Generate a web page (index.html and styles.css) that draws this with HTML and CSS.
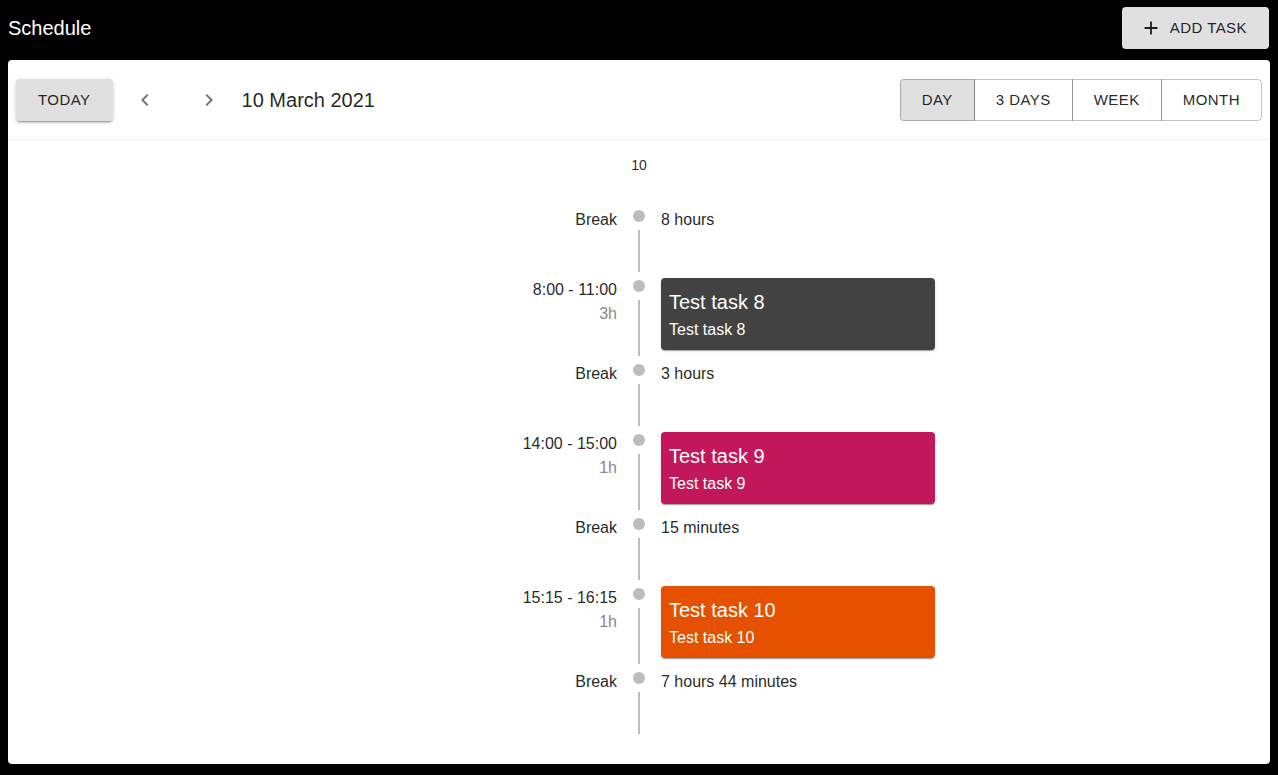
FILE: index.html
```html
<!DOCTYPE html>
<html lang="en">
<head>
<meta charset="utf-8">
<title>Schedule</title>
<link rel="stylesheet" href="styles.css">
</head>
<body>
<header class="appbar">
  <h1 class="app-title">Schedule</h1>
  <button class="btn btn-contained btn-add">
    <svg class="btn-icon" viewBox="0 0 24 24" width="22" height="22"><path d="M19 13h-6v6h-2v-6H5v-2h6V5h2v6h6v2z"/></svg>
    <span>Add task</span>
  </button>
</header>
<main class="paper">
  <div class="toolbar">
    <button class="btn btn-contained">Today</button>
    <button class="icon-btn icon-prev" aria-label="previous">
      <svg viewBox="0 0 24 24" width="24" height="24"><path d="M15.41 7.41L14 6l-6 6 6 6 1.41-1.41L10.83 12z"/></svg>
    </button>
    <button class="icon-btn icon-next" aria-label="next">
      <svg viewBox="0 0 24 24" width="24" height="24"><path d="M10 6L8.59 7.41 13.17 12l-4.58 4.59L10 18l6-6z"/></svg>
    </button>
    <div class="date">10 March 2021</div>
    <div class="spacer"></div>
    <div class="group">
      <button class="btn btn-outlined selected">Day</button>
      <button class="btn btn-outlined">3 days</button>
      <button class="btn btn-outlined">Week</button>
      <button class="btn btn-outlined">Month</button>
    </div>
  </div>
  <div class="day-label">10</div>
  <ul class="timeline">
    <li class="item">
      <div class="opp">Break</div>
      <div class="sep"><span class="dot"></span><span class="conn"></span></div>
      <div class="content">8 hours</div>
    </li>
    <li class="item">
      <div class="opp">8:00 - 11:00<span class="dur">3h</span></div>
      <div class="sep"><span class="dot"></span><span class="conn"></span></div>
      <div class="content">
        <div class="card card-grey">
          <div class="card-title">Test task 8</div>
          <div class="card-sub">Test task 8</div>
        </div>
      </div>
    </li>
    <li class="item">
      <div class="opp">Break</div>
      <div class="sep"><span class="dot"></span><span class="conn"></span></div>
      <div class="content">3 hours</div>
    </li>
    <li class="item">
      <div class="opp">14:00 - 15:00<span class="dur">1h</span></div>
      <div class="sep"><span class="dot"></span><span class="conn"></span></div>
      <div class="content">
        <div class="card card-pink">
          <div class="card-title">Test task 9</div>
          <div class="card-sub">Test task 9</div>
        </div>
      </div>
    </li>
    <li class="item">
      <div class="opp">Break</div>
      <div class="sep"><span class="dot"></span><span class="conn"></span></div>
      <div class="content">15 minutes</div>
    </li>
    <li class="item">
      <div class="opp">15:15 - 16:15<span class="dur">1h</span></div>
      <div class="sep"><span class="dot"></span><span class="conn"></span></div>
      <div class="content">
        <div class="card card-orange">
          <div class="card-title">Test task 10</div>
          <div class="card-sub">Test task 10</div>
        </div>
      </div>
    </li>
    <li class="item">
      <div class="opp">Break</div>
      <div class="sep"><span class="dot"></span><span class="conn"></span></div>
      <div class="content">7 hours 44 minutes</div>
    </li>
  </ul>
</main>
</body>
</html>
```
FILE: styles.css
```css
* { box-sizing: border-box; }
html, body {
  margin: 0;
  padding: 0;
  background: #000;
  font-family: "Liberation Sans", Arial, sans-serif;
  color: rgba(0,0,0,0.87);
}
.appbar {
  height: 56px;
  padding: 0 9px 0 8px;
  display: flex;
  align-items: center;
  justify-content: space-between;
}
.app-title {
  margin: 0;
  color: #fff;
  font-size: 20px;
  font-weight: 500;
  line-height: 32px;
}
.btn {
  font-family: inherit;
  font-size: 15px;
  line-height: 26px;
  letter-spacing: 0.03em;
  text-transform: uppercase;
  color: rgba(0,0,0,0.87);
  border: 0;
  border-radius: 4px;
  background: transparent;
  cursor: pointer;
  display: inline-flex;
  align-items: center;
}
.btn-contained {
  background: #e0e0e0;
  padding: 8px 22px;
  box-shadow: 0 3px 1px -2px rgba(0,0,0,.2), 0 2px 2px 0 rgba(0,0,0,.14), 0 1px 5px 0 rgba(0,0,0,.12);
}
.btn-add {
  box-shadow: none;
  padding: 8px 22px 8px 22px;
}
.btn-icon {
  margin-left: -4px;
  margin-right: 8px;
  fill: rgba(0,0,0,0.87);
}
.paper {
  margin: 4px 8px 0;
  height: 704px;
  background: #fff;
  border-radius: 4px;
  overflow: hidden;
}
.toolbar {
  display: flex;
  align-items: center;
  padding: 19px 8px 18px;
  border-bottom: 1px solid #eeeeee;
}
.icon-btn {
  width: 48px;
  height: 42px;
  border: 0;
  padding: 0;
  background: transparent;
  display: flex;
  align-items: center;
  justify-content: center;
  fill: rgba(0,0,0,0.54);
}
.icon-prev { margin-left: 8px; }
.icon-next { margin-left: 16px; }
.date {
  margin-left: 9px;
  font-size: 20px;
  line-height: 32px;
}
.spacer { flex: 1; }
.group { display: flex; }
.btn-outlined {
  padding: 7px 21px;
  border: 1px solid rgba(0,0,0,0.23);
  border-radius: 0;
}
.btn-outlined + .btn-outlined { margin-left: -1px; }
.btn-outlined:first-child { border-radius: 4px 0 0 4px; }
.btn-outlined:last-child { border-radius: 0 4px 4px 0; }
.btn-outlined.selected { background: #e0e0e0; }
.day-label {
  text-align: center;
  font-size: 14px;
  line-height: 20px;
  padding-top: 15px;
  margin-bottom: 27px;
}
.timeline {
  list-style: none;
  margin: 0;
  padding: 0 16px;
}
.item {
  display: flex;
  min-height: 70px;
}
.opp {
  flex: 1;
  text-align: right;
  padding: 6px 16px;
  font-size: 16px;
  line-height: 24px;
}
.dur {
  display: block;
  color: #8a8a8a;
}
.sep {
  flex: none;
  display: flex;
  flex-direction: column;
  align-items: center;
}
.dot {
  width: 12px;
  height: 12px;
  border-radius: 50%;
  background: #bdbdbd;
  margin: 8px 0;
}
.conn {
  width: 2px;
  flex-grow: 1;
  background: #bdbdbd;
}
.content {
  flex: 1;
  padding: 6px 16px;
  font-size: 16px;
  line-height: 24px;
}
.card {
  width: 274px;
  padding: 8px;
  border-radius: 4px;
  color: #fff;
  box-shadow: 0 2px 1px -1px rgba(0,0,0,.2), 0 1px 1px 0 rgba(0,0,0,.14), 0 1px 3px 0 rgba(0,0,0,.12);
}
.card-grey { background: #424242; }
.card-pink { background: #c2185b; }
.card-orange { background: #e65100; }
.card-title {
  font-size: 20px;
  line-height: 32px;
}
.card-sub {
  font-size: 16px;
  line-height: 24px;
}
```
